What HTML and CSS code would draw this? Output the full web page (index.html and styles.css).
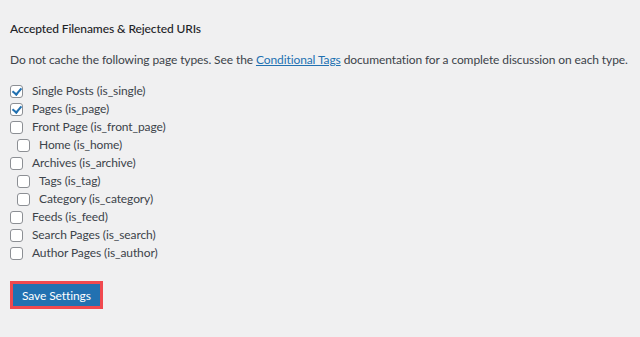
FILE: index.html
```html
<!DOCTYPE html>
<html>
<head>
  <meta charset="utf-8">
  <title>Accepted Filenames</title>
  <link rel="stylesheet" href="styles.css">
</head>
<body>
  <h3>Accepted Filenames &amp; Rejected URIs</h3>
  <p class="intro">Do not cache the following page types. See the <a href="#">Conditional Tags</a> documentation for a complete discussion on each type.</p>
  <ul class="types">
    <li><label><input type="checkbox" checked> Single Posts (is_single)</label></li>
    <li><label><input type="checkbox" checked> Pages (is_page)</label></li>
    <li><label><input type="checkbox"> Front Page (is_front_page)</label></li>
    <li class="sub"><label><input type="checkbox"> Home (is_home)</label></li>
    <li><label><input type="checkbox"> Archives (is_archive)</label></li>
    <li class="sub"><label><input type="checkbox"> Tags (is_tag)</label></li>
    <li class="sub"><label><input type="checkbox"> Category (is_category)</label></li>
    <li><label><input type="checkbox"> Feeds (is_feed)</label></li>
    <li><label><input type="checkbox"> Search Pages (is_search)</label></li>
    <li><label><input type="checkbox"> Author Pages (is_author)</label></li>
  </ul>
  <div class="submit">
    <button type="button" class="btn btn-primary">Save Settings</button>
  </div>
</body>
</html>
```

FILE: styles.css
```css
body {
  margin: 0;
  padding: 0 10px;
  background: #f0f0f1;
  color: #3c434a;
  font-family: Lato, "Open Sans", sans-serif;
  font-size: 12px;
  letter-spacing: -0.1px;
}

h3 {
  margin: 21px 0 0;
  font-size: 12px;
  font-weight: 500;
  color: #1d2327;
  line-height: 16px;
}

.intro {
  margin: 15px 0 14px;
  line-height: 16px;
  white-space: nowrap;
}

.intro a {
  color: #2271b1;
}

.types {
  list-style: none;
  margin: 0;
  padding: 0;
}

.types li {
  height: 18px;
  line-height: 18px;
}

.types li.sub {
  padding-left: 7px;
}

.types label {
  display: flex;
  align-items: center;
}

.types input {
  appearance: none;
  width: 13px;
  height: 13px;
  margin: 0 9px 0 0;
  border: 1px solid #8c8f94;
  border-radius: 3px;
  background: #fff;
  position: relative;
}

.types input:checked::after {
  content: "";
  position: absolute;
  left: 3px;
  top: 0;
  width: 4px;
  height: 7px;
  border: solid #2271b1;
  border-width: 0 2px 2px 0;
  transform: rotate(40deg);
}

.submit {
  margin-top: 19px;
}

.btn {
  font-family: inherit;
  font-size: 12px;
  letter-spacing: inherit;
  padding: 0 9px;
  height: 28px;
  border: 3px solid #f0494f;
  cursor: pointer;
}

.btn-primary {
  background: #2271b1;
  color: #fff;
}
```
